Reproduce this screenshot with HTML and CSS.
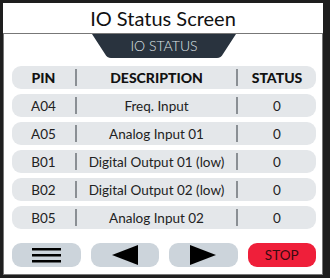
FILE: index.html
```html
<!DOCTYPE html>
<html>
<head>
    <title>IO Status Screen</title>
    <link rel="stylesheet" href="styles.css">
</head>
<body>
    <div class="screen">
        <h1 class="title">IO Status Screen</h1>
        <div class="panel">
            <div class="tab">IO STATUS</div>
            <div class="table">
                <div class="row head">
                    <span>PIN</span><i class="sep"></i><span>DESCRIPTION</span><i class="sep"></i><span>STATUS</span>
                </div>
                <div class="row">
                    <span>A04</span><i class="sep"></i><span>Freq. Input</span><i class="sep"></i><span>0</span>
                </div>
                <div class="row">
                    <span>A05</span><i class="sep"></i><span>Analog Input 01</span><i class="sep"></i><span>0</span>
                </div>
                <div class="row">
                    <span>B01</span><i class="sep"></i><span>Digital Output 01 (low)</span><i class="sep"></i><span>0</span>
                </div>
                <div class="row">
                    <span>B02</span><i class="sep"></i><span>Digital Output 02 (low)</span><i class="sep"></i><span>0</span>
                </div>
                <div class="row">
                    <span>B05</span><i class="sep"></i><span>Analog Input 02</span><i class="sep"></i><span>0</span>
                </div>
            </div>
            <div class="buttons">
                <button class="btn">
                    <svg width="29" height="16" viewBox="0 0 29 16"><rect x="0" y="1" width="29" height="2.5" fill="#000"/><rect x="0" y="7" width="29" height="2.5" fill="#000"/><rect x="0" y="13" width="29" height="2.5" fill="#000"/></svg>
                </button>
                <button class="btn">
                    <svg width="26" height="20" viewBox="0 0 26 20"><polygon points="26,0 26,20 0,10" fill="#000"/></svg>
                </button>
                <button class="btn">
                    <svg width="26" height="20" viewBox="0 0 26 20"><polygon points="0,0 0,20 26,10" fill="#000"/></svg>
                </button>
                <button class="btn stop">STOP</button>
            </div>
        </div>
    </div>
</body>
</html>
```

FILE: styles.css
```css
html, body {
    margin: 0;
    height: 100%;
}
body {
    background-color: #1e1e1e;
    padding: 3px 7px 3px 3px;
    box-sizing: border-box;
    font-family: "Lato", "DejaVu Sans", sans-serif;
}
.screen {
    background-color: white;
    height: 100%;
    display: flex;
    flex-direction: column;
}
.title {
    margin: 0;
    height: 30px;
    line-height: 30px;
    text-align: center;
    font-size: 20px;
    font-weight: normal;
    color: #111;
}
.panel {
    flex: 1;
    border: 1px solid #777;
    display: flex;
    flex-direction: column;
    align-items: center;
    padding: 0 6px 0 8px;
}
.tab {
    width: 144px;
    height: 24px;
    line-height: 24px;
    background-color: #29333e;
    color: #dfe3e7;
    text-align: center;
    font-size: 14px;
    font-weight: 300;
    clip-path: path("M0,0 H144 L131,20 Q129,24 125,24 H19 Q15,24 13,20 Z");
}
.table {
    align-self: stretch;
    margin-top: 8px;
    display: flex;
    flex-direction: column;
    gap: 5px;
}
.row {
    display: grid;
    grid-template-columns: 63px 2px 159px 2px 1fr;
    align-items: center;
    height: 23px;
    background-color: #e4e7ea;
    border-radius: 9px;
    font-size: 13.5px;
    color: #222;
}
.row span {
    text-align: center;
    white-space: nowrap;
}
.head {
    font-weight: 900;
    font-size: 14px;
    color: #111;
}
.sep {
    height: 17px;
    background-color: #8a8f94;
}
.buttons {
    align-self: stretch;
    margin-top: 14px;
    display: grid;
    grid-template-columns: repeat(4, 1fr);
    gap: 10px;
}
.btn {
    height: 24px;
    border: none;
    border-radius: 9px;
    background-color: #ccd4db;
    display: flex;
    align-items: center;
    justify-content: center;
    padding: 0;
    font-family: inherit;
}
.stop {
    background-color: #ef1f3a;
    color: #3a0a10;
    font-size: 13.5px;
}
```
